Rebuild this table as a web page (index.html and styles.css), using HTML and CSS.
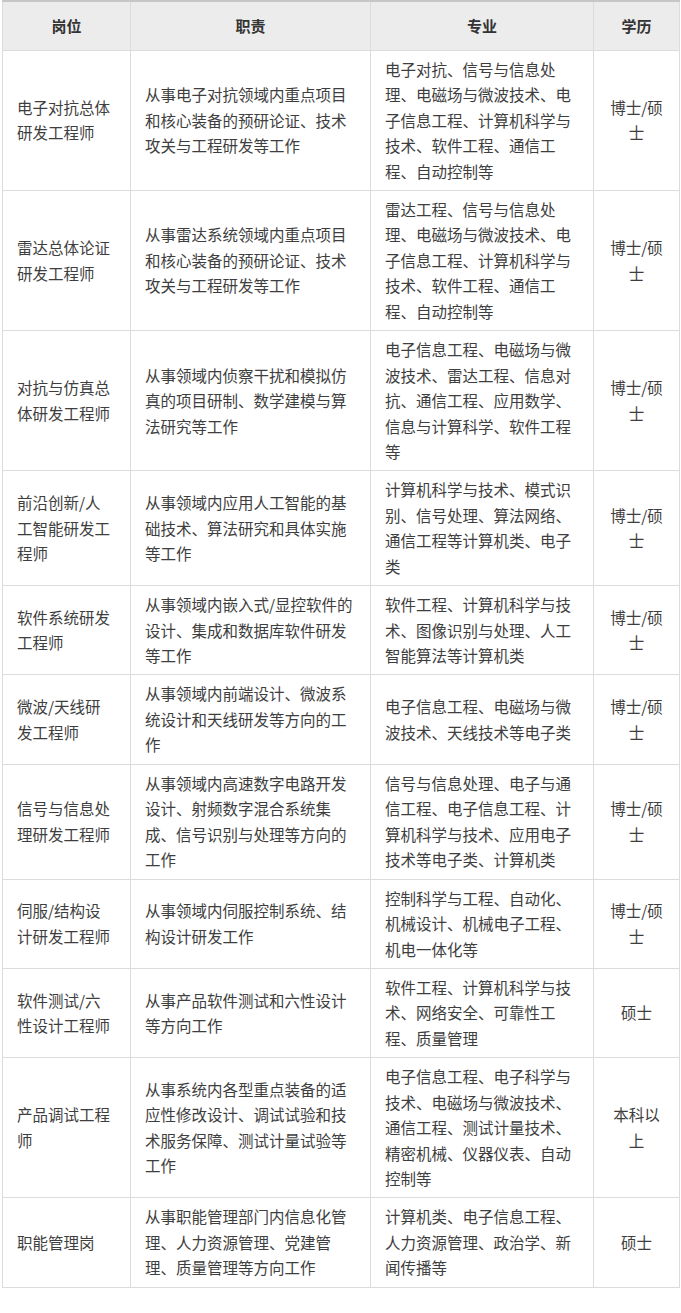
FILE: index.html
```html
<!DOCTYPE html>
<html lang="zh">
<head>
<meta charset="utf-8">
<link rel="stylesheet" href="styles.css">
</head>
<body>
<table class="jobs">
<colgroup>
<col class="c1"><col class="c2"><col class="c3"><col class="c4">
</colgroup>
<thead>
<tr><th>岗位</th><th>职责</th><th>专业</th><th>学历</th></tr>
</thead>
<tbody>
<tr><td>电子对抗总体研发工程师</td><td>从事电子对抗领域内重点项目和核心装备的预研论证、技术攻关与工程研发等工作</td><td>电子对抗、信号与信息处理、电磁场与微波技术、电子信息工程、计算机科学与技术、软件工程、通信工程、自动控制等</td><td class="edu">博士/硕士</td></tr>
<tr><td>雷达总体论证研发工程师</td><td>从事雷达系统领域内重点项目和核心装备的预研论证、技术攻关与工程研发等工作</td><td>雷达工程、信号与信息处理、电磁场与微波技术、电子信息工程、计算机科学与技术、软件工程、通信工程、自动控制等</td><td class="edu">博士/硕士</td></tr>
<tr><td>对抗与仿真总体研发工程师</td><td>从事领域内侦察干扰和模拟仿真的项目研制、数学建模与算法研究等工作</td><td>电子信息工程、电磁场与微波技术、雷达工程、信息对抗、通信工程、应用数学、信息与计算科学、软件工程等</td><td class="edu">博士/硕士</td></tr>
<tr><td>前沿创新/人工智能研发工程师</td><td>从事领域内应用人工智能的基础技术、算法研究和具体实施等工作</td><td>计算机科学与技术、模式识别、信号处理、算法网络、通信工程等计算机类、电子类</td><td class="edu">博士/硕士</td></tr>
<tr><td>软件系统研发工程师</td><td>从事领域内嵌入式/显控软件的设计、集成和数据库软件研发等工作</td><td>软件工程、计算机科学与技术、图像识别与处理、人工智能算法等计算机类</td><td class="edu">博士/硕士</td></tr>
<tr><td>微波/天线研发工程师</td><td>从事领域内前端设计、微波系统设计和天线研发等方向的工作</td><td>电子信息工程、电磁场与微波技术、天线技术等电子类</td><td class="edu">博士/硕士</td></tr>
<tr><td>信号与信息处理研发工程师</td><td>从事领域内高速数字电路开发设计、射频数字混合系统集成、信号识别与处理等方向的工作</td><td>信号与信息处理、电子与通信工程、电子信息工程、计算机科学与技术、应用电子技术等电子类、计算机类</td><td class="edu">博士/硕士</td></tr>
<tr><td>伺服/结构设计研发工程师</td><td>从事领域内伺服控制系统、结构设计研发工作</td><td>控制科学与工程、自动化、机械设计、机械电子工程、机电一体化等</td><td class="edu">博士/硕士</td></tr>
<tr><td>软件测试/六性设计工程师</td><td>从事产品软件测试和六性设计等方向工作</td><td>软件工程、计算机科学与技术、网络安全、可靠性工程、质量管理</td><td class="edu">硕士</td></tr>
<tr><td>产品调试工程师</td><td>从事系统内各型重点装备的适应性修改设计、调试试验和技术服务保障、测试计量试验等工作</td><td>电子信息工程、电子科学与技术、电磁场与微波技术、通信工程、测试计量技术、精密机械、仪器仪表、自动控制等</td><td class="edu">本科以上</td></tr>
<tr><td>职能管理岗</td><td>从事职能管理部门内信息化管理、人力资源管理、党建管理、质量管理等方向工作</td><td>计算机类、电子信息工程、人力资源管理、政治学、新闻传播等</td><td class="edu">硕士</td></tr>
</tbody>
</table>
</body>
</html>
```
FILE: styles.css
```css
html, body {
  margin: 0;
  padding: 0;
  background: #fff;
}
body {
  padding: 0 2px 0 2px;
  font-family: "Noto Sans CJK SC", "Noto Sans", sans-serif;
  color: #3e3e3e;
}
.jobs {
  width: 677px;
  border-collapse: collapse;
  table-layout: fixed;
  font-size: 15.5px;
  line-height: 25.5px;
}
.c1 { width: 128px; }
.c2 { width: 240px; }
.c3 { width: 223px; }
.c4 { width: 86px; }
.jobs th, .jobs td {
  border: 1px solid #dcdcdc;
  vertical-align: middle;
  word-break: break-all;
}
.jobs th {
  background: #ececec;
  border-top: 2px solid #c6c6c6;
  font-weight: bold;
  color: #333;
  text-align: center;
  padding: 11px 8px;
  font-size: 15px;
}
.jobs td {
  padding: 6px 13px 5.8px 14px;
  text-align: left;
}
.jobs td:first-child {
  padding-right: 18px;
}
.jobs td.edu {
  text-align: center;
  padding: 6px 12px 5.8px;
}
```
